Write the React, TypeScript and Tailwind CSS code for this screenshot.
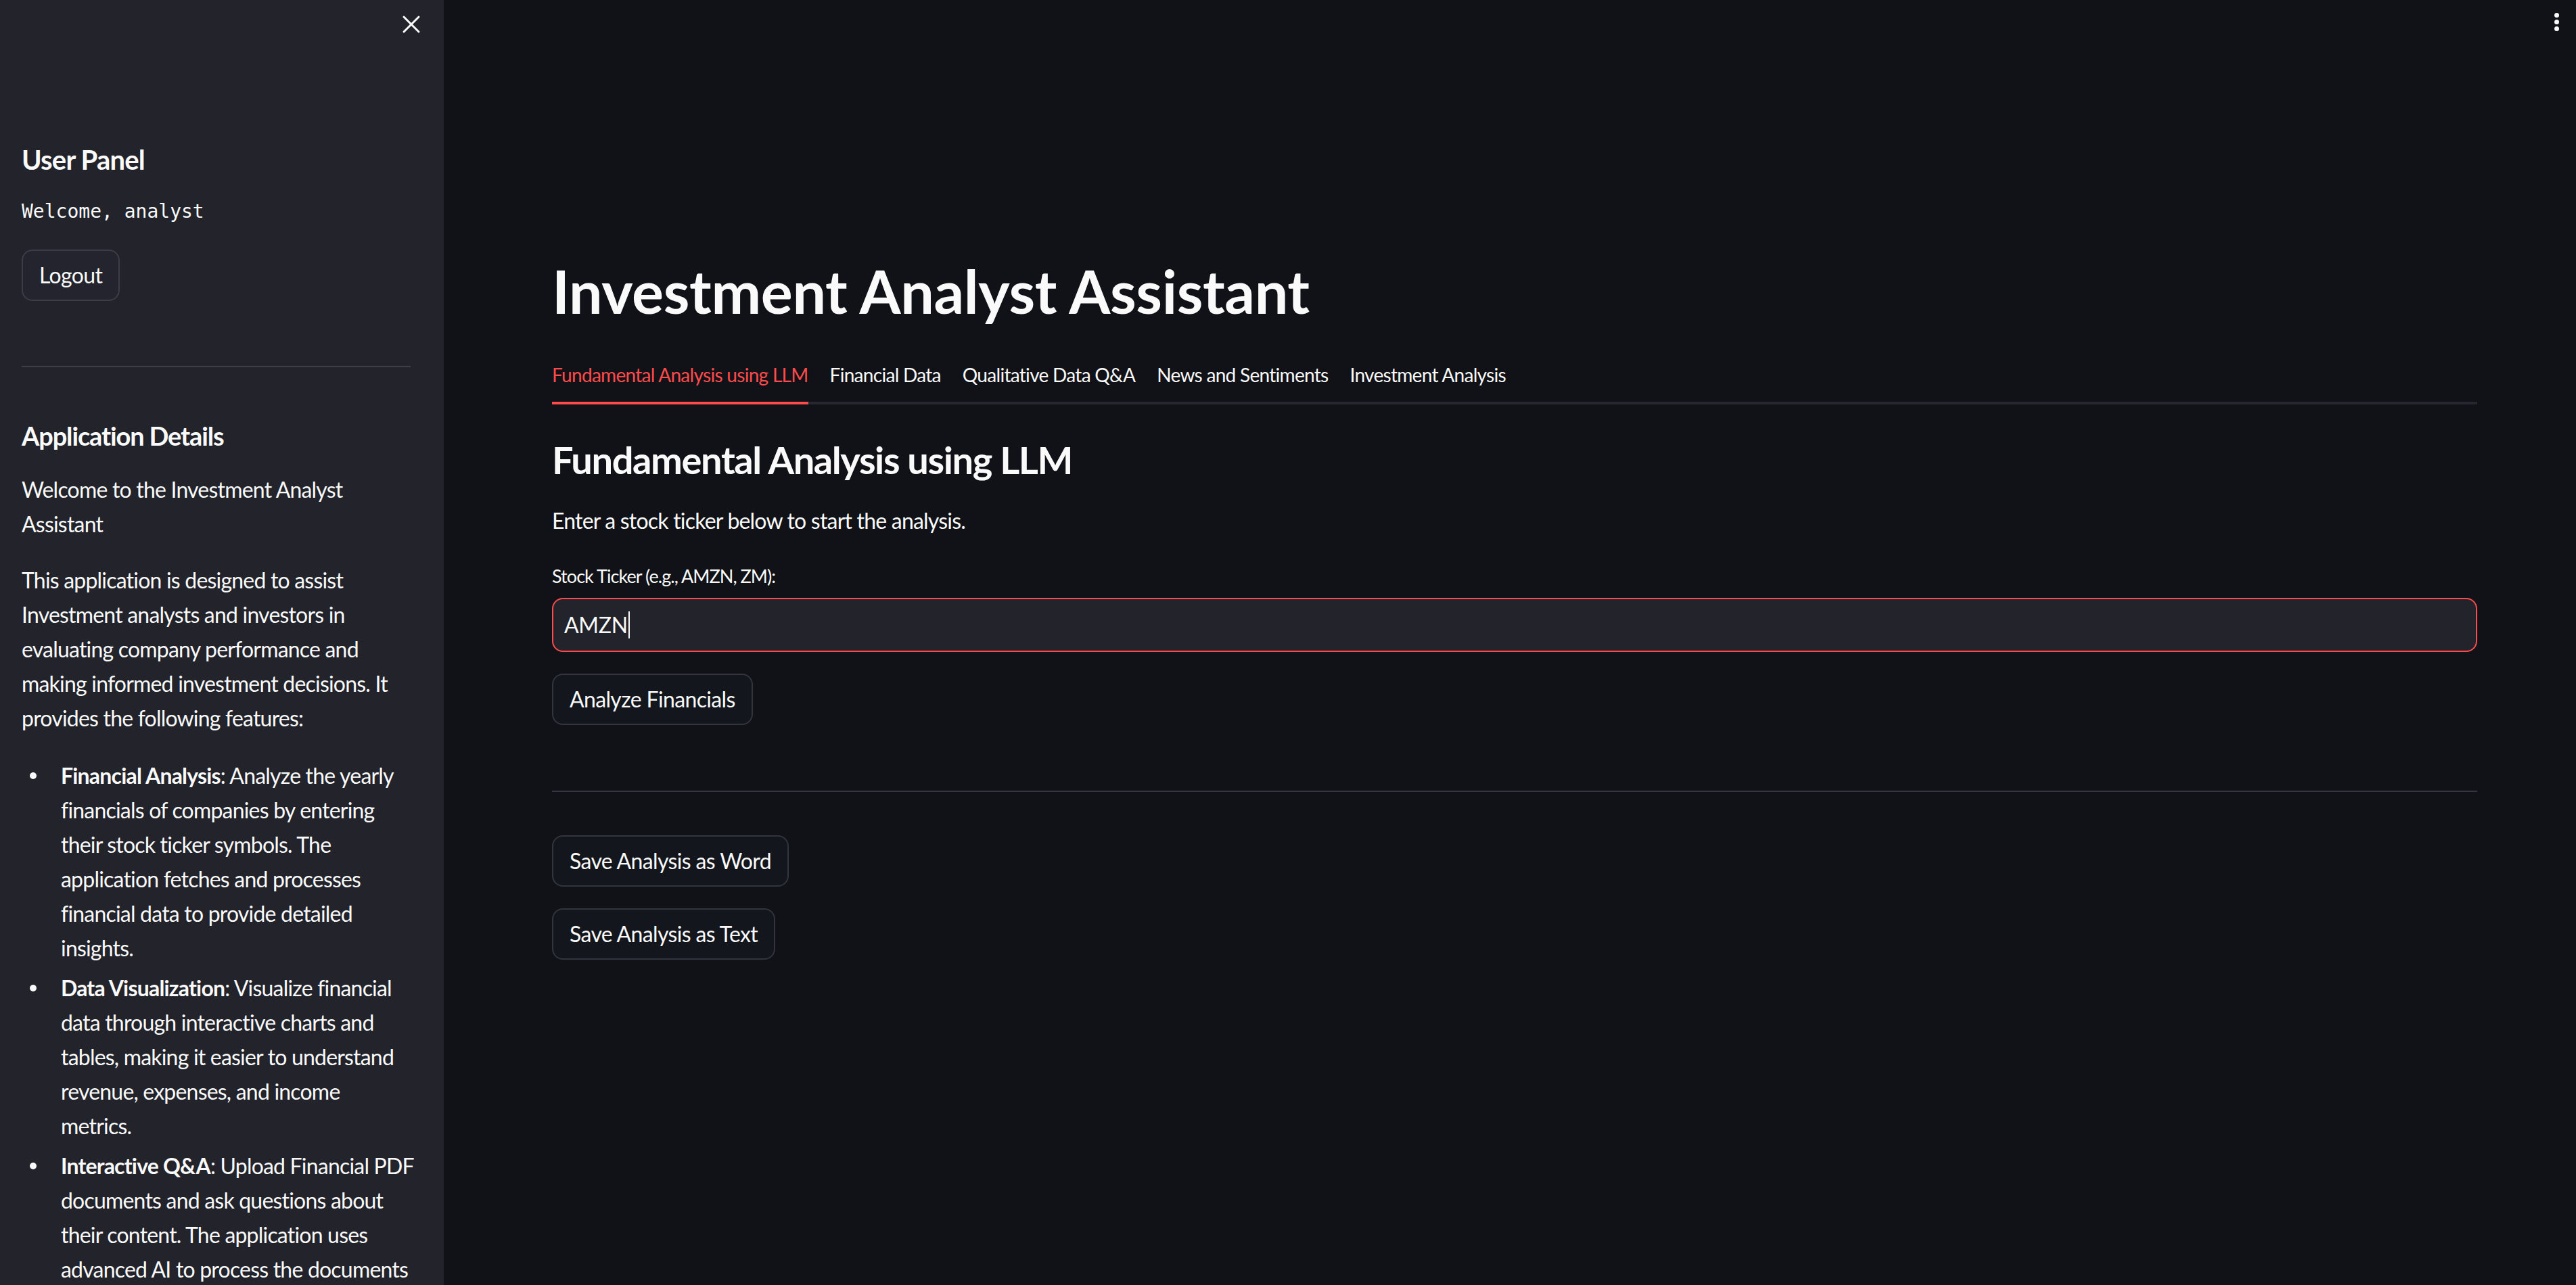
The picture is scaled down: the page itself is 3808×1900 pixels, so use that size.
import React from 'react';
import { X } from 'lucide-react';

const tabs = [
  'Fundamental Analysis using LLM',
  'Financial Data',
  'Qualitative Data Q&A',
  'News and Sentiments',
  'Investment Analysis',
];

const features = [
  {
    title: 'Financial Analysis',
    text: 'Analyze the yearly financials of companies by entering their stock ticker symbols. The application fetches and processes financial data to provide detailed insights.',
  },
  {
    title: 'Data Visualization',
    text: 'Visualize financial data through interactive charts and tables, making it easier to understand revenue, expenses, and income metrics.',
  },
  {
    title: 'Interactive Q&A',
    text: 'Upload Financial PDF documents and ask questions about their content. The application uses advanced AI to process the documents and provide accurate answers.',
  },
];

const font = "font-['Lato','Noto_Sans',sans-serif]";

const Btn = ({ label }: { label: string }) => (
  <button className="self-start shrink-0 h-[76px] px-[24px] rounded-[16px] border-2 border-[#33353e] bg-[#13161d] text-[32px] text-[#fafafa] leading-none tracking-[-0.02em]">
    {label}
  </button>
);

const App = () => {
  return (
    <div className={`flex h-[1900px] w-full overflow-hidden bg-[#111217] text-[#fafafa] ${font}`}>
      {/* SIDEBAR */}
      <aside className="w-[656px] shrink-0 bg-[#22232b] pl-[32px] pr-[44px] overflow-hidden">
        <div className="h-[72px] flex items-center justify-end -mr-[18px]">
          <X size={44} strokeWidth={1.6} className="text-[#fafafa]" />
        </div>

        <h3 className="mt-[140px] text-[40px] leading-[48px] font-bold tracking-[-0.02em]">User Panel</h3>
        <p className="mt-[33px] font-['DejaVu_Sans_Mono','Liberation_Mono',monospace] text-[28px] leading-[40px]">
          Welcome, analyst
        </p>
        <button className="block mt-[36px] h-[76px] px-[24px] rounded-[16px] border-2 border-[#3b3d47] bg-[#23242d] text-[32px] leading-none tracking-[-0.02em]">
          Logout
        </button>

        <div className="mt-[96px] h-[2px] bg-[#3d3f49] mr-[5px]" />

        <h3 className="mt-[77px] text-[38px] leading-[48px] font-bold tracking-[-0.03em]">Application Details</h3>
        <div className="text-[32px] leading-[51px] tracking-[-0.025em]">
          <p className="mt-[30px]">Welcome to the Investment Analyst Assistant</p>
          <p className="mt-[32px]">
            This application is designed to assist Investment analysts and investors in evaluating company
            performance and making informed investment decisions. It provides the following features:
          </p>
          <ul className="mt-[34px]">
            {features.map((f, i) => (
              <li key={f.title} className={`flex ${i > 0 ? 'mt-[8px]' : ''}`}>
                <span className="w-[58px] shrink-0 h-[51px] flex items-center pl-[12px]">
                  <span className="w-[10px] h-[10px] rounded-full bg-[#fafafa]" />
                </span>
                <span>
                  <span className="font-bold">{f.title}</span>: {f.text}
                </span>
              </li>
            ))}
          </ul>
        </div>
      </aside>

      {/* MAIN */}
      <main className="relative flex-1 pl-[160px] pr-[146px] flex flex-col">
        <div className="absolute top-[19px] right-[25px] flex flex-col gap-[3px]">
          <span className="w-[7px] h-[7px] rounded-full bg-[#fafafa]" />
          <span className="w-[7px] h-[7px] rounded-full bg-[#fafafa]" />
          <span className="w-[7px] h-[7px] rounded-full bg-[#fafafa]" />
        </div>

        <h1 className="mt-[377px] text-[88px] leading-[106px] font-bold tracking-[-0.004em]">
          Investment Analyst Assistant
        </h1>

        <div className="mt-[48px] flex gap-[32px] border-b-4 border-[#26272f]">
          {tabs.map((t, i) => (
            <div
              key={t}
              className={`pb-[17px] -mb-[4px] border-b-4 text-[28px] leading-[46px] tracking-[-0.025em] ${
                i === 0 ? 'border-[#ff4b4b] text-[#ff4b4b]' : 'border-transparent text-[#fafafa]'
              }`}
            >
              {t}
            </div>
          ))}
        </div>

        <h2 className="mt-[48px] text-[56px] leading-[67px] font-bold tracking-[-0.025em]">
          Fundamental Analysis using LLM
        </h2>
        <p className="mt-[31px] text-[32px] leading-[51px] tracking-[-0.025em]">
          Enter a stock ticker below to start the analysis.
        </p>
        <label className="mt-[37px] text-[27px] leading-[40px] tracking-[-0.035em]">Stock Ticker (e.g., AMZN, ZM):</label>
        <div className="mt-[12px] h-[80px] rounded-[16px] border-2 border-[#ff4b4b] bg-[#22232b] flex items-center pl-[16px]">
          <span className="text-[32px] tracking-[-0.01em]">AMZN</span>
          <span className="ml-[1px] w-[2px] h-[40px] bg-[#fafafa]" />
        </div>

        <div className="mt-[32px] flex">
          <Btn label="Analyze Financials" />
        </div>

        <div className="mt-[97px] h-[2px] bg-[#33353e]" />

        <div className="mt-[64px] flex flex-col gap-[32px]">
          <Btn label="Save Analysis as Word" />
          <Btn label="Save Analysis as Text" />
        </div>
      </main>
    </div>
  );
};

export default App;
